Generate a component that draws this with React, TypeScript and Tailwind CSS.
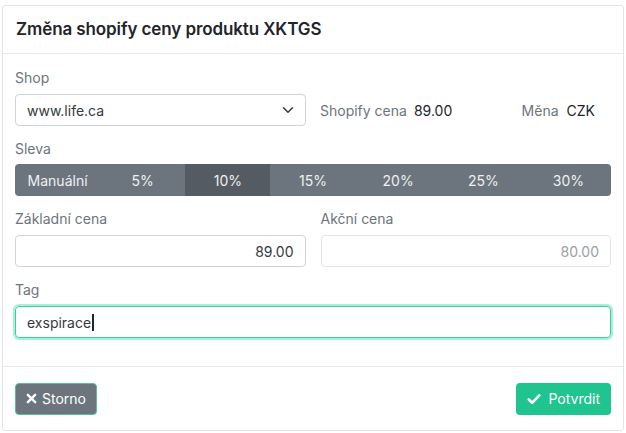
import { ChevronDown } from 'lucide-react';

const DISCOUNTS = ['Manuální', '5%', '10%', '15%', '20%', '25%', '30%'];

export default function App() {
  return (
    <div
      className="w-[626px] h-[433px] bg-white pt-[5px] px-[2px] pb-[2px] text-[14px] text-[#212529]"
      style={{ fontFamily: 'Inter, "Noto Sans", sans-serif' }}
    >
      <div className="h-full border border-[#e3e6e8] rounded-[3px] flex flex-col">
        {/* Header */}
        <div className="h-[48px] flex items-center px-[13px] border-b border-[#e6e8ea] flex-shrink-0">
          <h1 className="text-[17px] font-semibold text-[#212529] tracking-[-0.1px]">
            Změna shopify ceny produktu XKTGS
          </h1>
        </div>

        {/* Body */}
        <div className="flex-1 px-[12px] pt-[15px]">
          {/* Shop */}
          <div className="mb-[14px]">
            <div className="h-[25px] text-[#6c757d] leading-[18px]">Shop</div>
            <div className="flex items-center">
              <div className="w-[291px] h-[32px] border border-[#ced4da] rounded-[4px] flex items-center justify-between pl-[11px] pr-[8px] text-[#343a40]">
                <span>www.life.ca</span>
                <ChevronDown size={18} strokeWidth={2} className="text-[#343a40]" />
              </div>
              <div className="ml-[14px] flex items-center">
                <span className="text-[#6c757d]">Shopify cena</span>
                <span className="ml-[7px] text-[#212529]">89.00</span>
              </div>
              <div className="ml-auto mr-[16px] flex items-center">
                <span className="text-[#6c757d]">Měna</span>
                <span className="ml-[8px] text-[#212529]">CZK</span>
              </div>
            </div>
          </div>

          {/* Sleva */}
          <div className="mb-[14px]">
            <div className="h-[24px] text-[#6c757d] leading-[18px]">Sleva</div>
            <div className="h-[32px] rounded-[4px] bg-[#6c757d] flex overflow-hidden">
              {DISCOUNTS.map(d => (
                <div
                  key={d}
                  className={
                    d === '10%'
                      ? 'flex-1 flex items-center justify-center text-[#eef0f2] bg-[#545b62]'
                      : 'flex-1 flex items-center justify-center text-[#eef0f2]'
                  }
                >
                  {d}
                </div>
              ))}
            </div>
          </div>

          {/* Ceny */}
          <div className="mb-[14px] flex gap-[15px]">
            <div className="flex-1">
              <div className="h-[25px] text-[#6c757d] leading-[18px]">Základní cena</div>
              <div className="h-[32px] border border-[#ced4da] rounded-[4px] flex items-center justify-end px-[11px] text-[#343a40]">
                89.00
              </div>
            </div>
            <div className="flex-1">
              <div className="h-[25px] text-[#6c757d] leading-[18px]">Akční cena</div>
              <div className="h-[32px] border border-[#e2e5e8] rounded-[4px] flex items-center justify-end px-[11px] text-[#9aa0a6]">
                80.00
              </div>
            </div>
          </div>

          {/* Tag */}
          <div>
            <div className="h-[25px] text-[#6c757d] leading-[18px]">Tag</div>
            <div className="h-[32px] border border-[#3fcf9a] rounded-[4px] shadow-[0_0_0_2px_#a6f0d6] flex items-center px-[11px] text-[#343a40]">
              <span>exspirace</span>
              <span className="w-[1.5px] h-[17px] bg-[#212529] ml-[1px]" />
            </div>
          </div>
        </div>

        {/* Footer */}
        <div className="h-[64px] border-t border-[#e6e8ea] flex items-center justify-between px-[12px] flex-shrink-0">
          <button className="h-[32px] px-[10px] rounded-[4px] bg-[#6c757d] border border-[#4fc3a0] text-white flex items-center gap-[5px]">
            <svg width="11" height="11" viewBox="0 0 12 12">
              <path d="M2 2 L10 10 M10 2 L2 10" stroke="white" strokeWidth="2.6" strokeLinecap="round" />
            </svg>
            <span>Storno</span>
          </button>
          <button className="h-[32px] px-[11px] rounded-[4px] bg-[#20c48f] text-white flex items-center gap-[7px]">
            <svg width="14" height="12" viewBox="0 0 14 12">
              <path d="M1.8 6.5 L5.2 9.8 L12.2 2.4" fill="none" stroke="white" strokeWidth="2.6" strokeLinecap="round" strokeLinejoin="round" />
            </svg>
            <span>Potvrdit</span>
          </button>
        </div>
      </div>
    </div>
  );
}
